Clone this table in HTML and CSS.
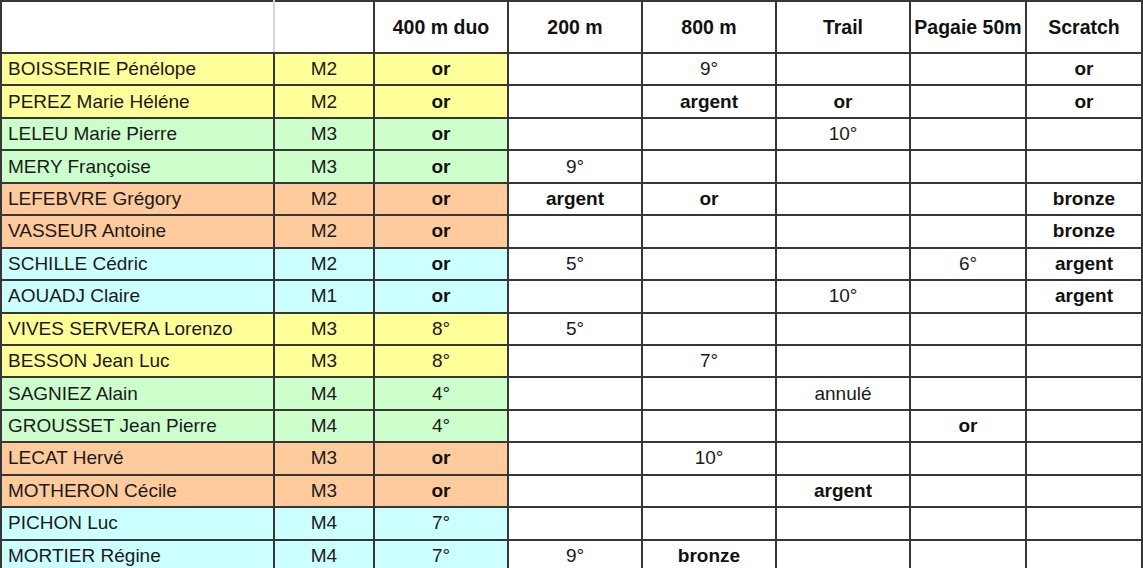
FILE: index.html
```html
<!DOCTYPE html>
<html lang="fr">
<head>
<meta charset="utf-8">
<title>Résultats</title>
<link rel="stylesheet" href="styles.css">
</head>
<body>
<table class="sheet">
  <colgroup>
    <col class="c-name"><col class="c-cat"><col class="c-ev"><col class="c-ev"><col class="c-ev"><col class="c-ev"><col class="c-sm"><col class="c-sm">
  </colgroup>
  <thead>
    <tr class="head">
      <th class="blank-a"></th><th class="blank-b"></th>
      <th>400 m duo</th><th>200 m</th><th>800 m</th><th>Trail</th><th>Pagaie 50m</th><th>Scratch</th>
    </tr>
  </thead>
  <tbody>
    <tr class="yellow"><td class="name">BOISSERIE Pénélope</td><td>M2</td><td class="b">or</td><td></td><td>9°</td><td></td><td></td><td class="b">or</td></tr>
    <tr class="yellow"><td class="name">PEREZ Marie Héléne</td><td>M2</td><td class="b">or</td><td></td><td class="b">argent</td><td class="b">or</td><td></td><td class="b">or</td></tr>
    <tr class="green"><td class="name">LELEU Marie Pierre</td><td>M3</td><td class="b">or</td><td></td><td></td><td>10°</td><td></td><td></td></tr>
    <tr class="green"><td class="name">MERY Françoise</td><td>M3</td><td class="b">or</td><td>9°</td><td></td><td></td><td></td><td></td></tr>
    <tr class="orange"><td class="name">LEFEBVRE Grégory</td><td>M2</td><td class="b">or</td><td class="b">argent</td><td class="b">or</td><td></td><td></td><td class="b">bronze</td></tr>
    <tr class="orange"><td class="name">VASSEUR Antoine</td><td>M2</td><td class="b">or</td><td></td><td></td><td></td><td></td><td class="b">bronze</td></tr>
    <tr class="cyan"><td class="name">SCHILLE Cédric</td><td>M2</td><td class="b">or</td><td>5°</td><td></td><td></td><td>6°</td><td class="b">argent</td></tr>
    <tr class="cyan"><td class="name">AOUADJ Claire</td><td>M1</td><td class="b">or</td><td></td><td></td><td>10°</td><td></td><td class="b">argent</td></tr>
    <tr class="yellow"><td class="name">VIVES SERVERA Lorenzo</td><td>M3</td><td>8°</td><td>5°</td><td></td><td></td><td></td><td></td></tr>
    <tr class="yellow"><td class="name">BESSON Jean Luc</td><td>M3</td><td>8°</td><td></td><td>7°</td><td></td><td></td><td></td></tr>
    <tr class="green"><td class="name">SAGNIEZ Alain</td><td>M4</td><td>4°</td><td></td><td></td><td>annulé</td><td></td><td></td></tr>
    <tr class="green"><td class="name">GROUSSET Jean Pierre</td><td>M4</td><td>4°</td><td></td><td></td><td></td><td class="b">or</td><td></td></tr>
    <tr class="orange"><td class="name">LECAT Hervé</td><td>M3</td><td class="b">or</td><td></td><td>10°</td><td></td><td></td><td></td></tr>
    <tr class="orange"><td class="name">MOTHERON Cécile</td><td>M3</td><td class="b">or</td><td></td><td></td><td class="b">argent</td><td></td><td></td></tr>
    <tr class="cyan"><td class="name">PICHON Luc</td><td>M4</td><td>7°</td><td></td><td></td><td></td><td></td><td></td></tr>
    <tr class="cyan"><td class="name">MORTIER Régine</td><td>M4</td><td>7°</td><td>9°</td><td class="b">bronze</td><td></td><td></td><td></td></tr>
  </tbody>
</table>
</body>
</html>
```
FILE: styles.css
```css
html, body {
  margin: 0;
  padding: 0;
  background: #ffffff;
}

body {
  font-family: "Liberation Sans", Arial, sans-serif;
  color: #1a1a1a;
}

.sheet {
  border-collapse: collapse;
  table-layout: fixed;
  width: 1141px;
}

.c-name { width: 273px; }
.c-cat { width: 100px; }
.c-ev { width: 134px; }
.c-sm { width: 116px; }

.sheet th,
.sheet td {
  border: 2px solid #363636;
  padding: 0;
  text-align: center;
  vertical-align: middle;
  white-space: nowrap;
  overflow: hidden;
  font-size: 19px;
  line-height: 22px;
}

.sheet th {
  font-weight: bold;
  font-size: 19.5px;
  color: #111;
}

.head {
  height: 52px;
}

.sheet th.blank-a {
  border-right-color: #d4d4d4;
}

.sheet th.blank-b {
  border-left-color: #d4d4d4;
}

.sheet tbody tr {
  height: 32.45px;
}

.sheet td.name {
  text-align: left;
  padding-left: 6px;
}

.sheet td.b {
  font-weight: bold;
  color: #111;
}

.yellow td:nth-child(-n+3) { background: #ffff99; }
.green td:nth-child(-n+3) { background: #ccffcc; }
.orange td:nth-child(-n+3) { background: #ffca9c; }
.cyan td:nth-child(-n+3) { background: #ccffff; }
```
